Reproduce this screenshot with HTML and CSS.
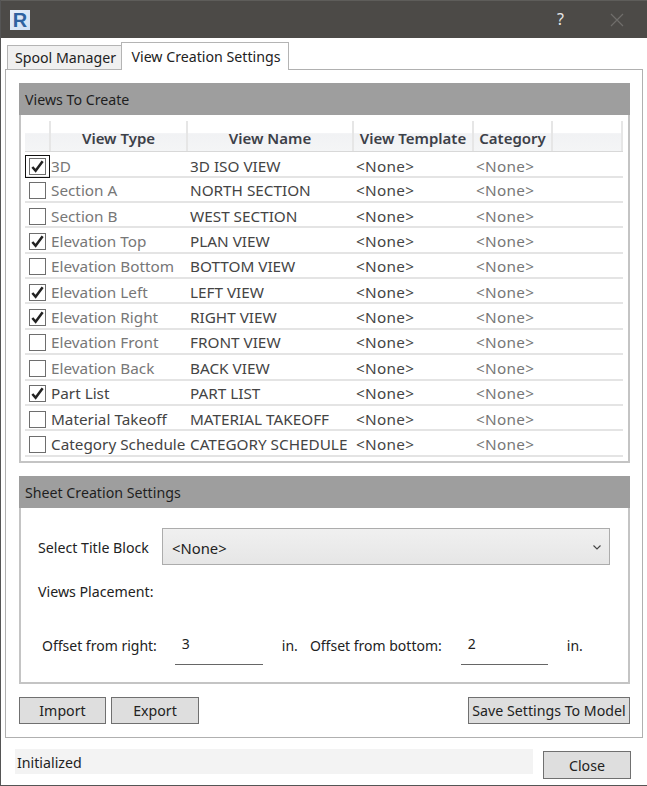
FILE: index.html
```html
<!DOCTYPE html>
<html lang="en">
<head>
<meta charset="utf-8">
<title>View Creation Settings</title>
<link rel="stylesheet" href="styles.css">
</head>
<body>
<div class="window">
  <header class="titlebar">
    <div class="logo"><span>R</span></div>
    <div class="help">?</div>
    <svg class="close-x" width="14" height="14" viewBox="0 0 14 14"><path d="M1 1L13 13M13 1L1 13" stroke="#6f6e6b" stroke-width="1.2" fill="none"/></svg>
  </header>
  <div class="tabs">
    <div class="tab">Spool Manager</div>
    <div class="tab active">View Creation Settings</div>
  </div>
  <main class="panel">
    <section class="group group-views">
      <h2 class="group-head">Views To Create</h2>
      <div class="group-body views-body">
        <div class="grid">
          <div class="row head">
            <div class="c c0"></div><div class="c c1">View Type</div><div class="c c2">View Name</div><div class="c c3">View Template</div><div class="c c4">Category</div><div class="c c5"></div>
          </div>
          <div class="row"><div class="c c0"><span class="focus"><span class="cb on"><svg viewBox="0 0 16 16"><path d="M2.5 8.5L6 12.5L13.5 2.5" /></svg></span></span></div><div class="c c1 dim">3D</div><div class="c c2">3D ISO VIEW</div><div class="c c3">&lt;None&gt;</div><div class="c c4">&lt;None&gt;</div></div>
          <div class="row"><div class="c c0"><span class="cb"></span></div><div class="c c1 dim">Section A</div><div class="c c2">NORTH SECTION</div><div class="c c3">&lt;None&gt;</div><div class="c c4">&lt;None&gt;</div></div>
          <div class="row"><div class="c c0"><span class="cb"></span></div><div class="c c1 dim">Section B</div><div class="c c2">WEST SECTION</div><div class="c c3">&lt;None&gt;</div><div class="c c4">&lt;None&gt;</div></div>
          <div class="row"><div class="c c0"><span class="cb on"><svg viewBox="0 0 16 16"><path d="M2.5 8.5L6 12.5L13.5 2.5" /></svg></span></div><div class="c c1 dim">Elevation Top</div><div class="c c2">PLAN VIEW</div><div class="c c3">&lt;None&gt;</div><div class="c c4">&lt;None&gt;</div></div>
          <div class="row"><div class="c c0"><span class="cb"></span></div><div class="c c1 dim">Elevation Bottom</div><div class="c c2">BOTTOM VIEW</div><div class="c c3">&lt;None&gt;</div><div class="c c4">&lt;None&gt;</div></div>
          <div class="row"><div class="c c0"><span class="cb on"><svg viewBox="0 0 16 16"><path d="M2.5 8.5L6 12.5L13.5 2.5" /></svg></span></div><div class="c c1 dim">Elevation Left</div><div class="c c2">LEFT VIEW</div><div class="c c3">&lt;None&gt;</div><div class="c c4">&lt;None&gt;</div></div>
          <div class="row"><div class="c c0"><span class="cb on"><svg viewBox="0 0 16 16"><path d="M2.5 8.5L6 12.5L13.5 2.5" /></svg></span></div><div class="c c1 dim">Elevation Right</div><div class="c c2">RIGHT VIEW</div><div class="c c3">&lt;None&gt;</div><div class="c c4">&lt;None&gt;</div></div>
          <div class="row"><div class="c c0"><span class="cb"></span></div><div class="c c1 dim">Elevation Front</div><div class="c c2">FRONT VIEW</div><div class="c c3">&lt;None&gt;</div><div class="c c4">&lt;None&gt;</div></div>
          <div class="row"><div class="c c0"><span class="cb"></span></div><div class="c c1 dim">Elevation Back</div><div class="c c2">BACK VIEW</div><div class="c c3">&lt;None&gt;</div><div class="c c4">&lt;None&gt;</div></div>
          <div class="row"><div class="c c0"><span class="cb on"><svg viewBox="0 0 16 16"><path d="M2.5 8.5L6 12.5L13.5 2.5" /></svg></span></div><div class="c c1">Part List</div><div class="c c2">PART LIST</div><div class="c c3">&lt;None&gt;</div><div class="c c4">&lt;None&gt;</div></div>
          <div class="row"><div class="c c0"><span class="cb"></span></div><div class="c c1">Material Takeoff</div><div class="c c2">MATERIAL TAKEOFF</div><div class="c c3">&lt;None&gt;</div><div class="c c4">&lt;None&gt;</div></div>
          <div class="row"><div class="c c0"><span class="cb"></span></div><div class="c c1">Category Schedule</div><div class="c c2">CATEGORY SCHEDULE</div><div class="c c3">&lt;None&gt;</div><div class="c c4">&lt;None&gt;</div></div>
        </div>
      </div>
    </section>
    <section class="group group-sheet">
      <h2 class="group-head">Sheet Creation Settings</h2>
      <div class="group-body sheet-body">
        <div class="title-row">
          <label class="title-label">Select Title Block</label>
          <div class="combo"><span>&lt;None&gt;</span><svg width="8" height="5" viewBox="0 0 8 5"><path d="M0.5 0.5L4 4L7.5 0.5" stroke="#444" stroke-width="1.1" fill="none"/></svg></div>
        </div>
        <div class="placement">Views Placement:</div>
        <div class="offset-row">
          <span class="off-label">Offset from right:</span>
          <span class="input input-right">3</span>
          <span class="unit unit-right">in.</span>
          <span class="off-label">Offset from bottom:</span>
          <span class="input input-bottom">2</span>
          <span class="unit unit-bottom">in.</span>
        </div>
      </div>
    </section>
    <div class="actions">
      <button class="btn btn-import">Import</button>
      <button class="btn btn-export">Export</button>
      <button class="btn btn-save">Save Settings To Model</button>
    </div>
  </main>
  <footer class="statusline">
    <div class="status">Initialized</div>
    <button class="btn btn-close">Close</button>
  </footer>
</div>
</body>
</html>
```
FILE: styles.css
```css
* { box-sizing: border-box; }
html, body { margin: 0; padding: 0; background: #fff; }
body { font-family: "Noto Sans", "Open Sans", sans-serif; font-size: 14.2px; color: #222; }
.window { width: 647px; height: 786px; border-left: 1px solid #555; border-bottom: 1px solid #555; display: flex; flex-direction: column; overflow: hidden; }
.titlebar { height: 38px; flex: none; background: #4c4a47; border-top: 1px solid #5e5d5a; display: flex; align-items: center; padding-left: 10px; margin-left: -1px; }
.logo { width: 20px; height: 20px; background: linear-gradient(135deg, #e6eef8, #cfe0f4); display: flex; align-items: center; justify-content: center; }
.logo span { font: bold 20px "Liberation Sans", sans-serif; color: #2e62a0; line-height: 20px; }
.help { margin-left: auto; color: #e8e8e8; font-size: 16px; line-height: 20px; margin-top: -2px; }
.close-x { margin-left: 46px; margin-right: 23px; }
.tabs { flex: none; height: 32px; padding: 4px 0 0 6px; display: flex; align-items: flex-end; position: relative; z-index: 1; margin-bottom: -1px; }
.tab { height: 25px; width: 114px; background: #f0f0f0; border: 1px solid #b4b4b4; border-right: 0; text-align: center; padding-left: 2px; line-height: 23px; color: #222; white-space: nowrap; }
.tab.active { height: 28px; width: 168px; background: #fff; border: 1px solid #b4b4b4; border-bottom: 0; line-height: 27px; }
.panel { flex: none; width: 638px; height: 669px; margin-left: 4px; border: 1px solid #b0b0b0; padding: 13px 12px 0 13px; display: flex; flex-direction: column; }
.group { display: flex; flex-direction: column; }
.group-views { height: 380px; }
.group-sheet { height: 208px; margin-top: 13px; }
.group-head { margin: 0; height: 32px; flex: none; background: #9e9e9e; font-size: 14.2px; font-weight: 400; line-height: 34px; padding-left: 6px; color: #1e1e1e; }
.group-body { flex: 1; border: 2px solid #c4c4c4; border-top: 0; }
.views-body { padding: 6px 5px 0 4px; }
.grid { display: flex; flex-direction: column; }
.row { display: grid; grid-template-columns: 26px 137px 166px 120px 79px 70px; height: 25.36px; border-bottom: 2px solid #e4e4e4; align-items: center; font-size: 15.3px; color: #444; }
.row.head { height: 31.3px; border-bottom: 1px solid #d8d8d8; background: linear-gradient(#fff 0, #fff 40%, #f1f2f4 42%, #f4f5f6 100%); font-weight: 600; font-size: 15px; color: #3c4048; }
.row.head .c { height: 100%; border-right: 2px solid #e6e6e6; display: flex; align-items: center; justify-content: center; white-space: nowrap; padding: 3px 0 0; color: #3c4048; letter-spacing: 0; }
.c { white-space: nowrap; padding: 2px 0 0 2px; }
.c0 { padding: 3px 0 0 4px; display: flex; align-items: center; }
.c1 { padding-left: 0; }
.dim { color: #777; }
.c4 { color: #777; }
.c3, .c4 { letter-spacing: .3px; }
.cb { display: block; width: 17px; height: 17px; border: 1px solid #6e6e6e; background: #fff; flex: none; }
.cb svg { display: block; width: 15px; height: 15px; }
.cb path { fill: none; stroke: #222; stroke-width: 2.7; }
.focus { display: block; margin-left: -4px; border: 1px solid #111; flex: none; width: 25px; height: 23px; padding: 2px 3px; }
.sheet-body { padding: 20px 18px 0 17px; }
.title-row { display: flex; align-items: center; height: 37px; }
.title-label { width: 124px; flex: none; color: #222; padding-top: 2px; }
.combo { flex: 1; height: 37px; background: linear-gradient(#f0f0f0, #e6e6e6); border: 1px solid #acacac; display: flex; align-items: center; justify-content: space-between; padding: 2px 8px 0 9px; font-size: 14.8px; }
.placement { margin-top: 16px; line-height: 22px; }
.offset-row { display: flex; align-items: flex-start; margin: 28px 0 0 4px; height: 38px; font-size: 14px; }
.off-label { line-height: 26px; margin-top: 2px; white-space: nowrap; }
.input { display: block; height: 35px; border-bottom: 1px solid #666; line-height: 28px; padding-left: 7px; flex: none; width: 88px; margin-top: -1px; }
.input-right { margin-left: 18px; }
.input-bottom { margin-left: 19px; width: 87px; }
.unit { line-height: 26px; margin-top: 2px; }
.unit-right { margin: 2px 12px 0 19px; }
.unit-bottom { margin-left: 19px; }
.actions { display: flex; margin-top: 13px; gap: 5px; }
.btn { font: inherit; color: #222; height: 27px; background: #dedede; border: 1px solid #707070; padding: 0; border-radius: 0; white-space: nowrap; }
.btn-import { width: 87px; }
.btn-export { width: 88px; }
.btn-save { width: 162px; margin-left: auto; }
.statusline { flex: none; display: flex; align-items: flex-start; padding: 11px 0 0 14px; }
.status { width: 518px; height: 25px; background: #f3f3f3; line-height: 27px; padding-left: 2px; color: #222; }
.btn-close { width: 88px; height: 28px; margin: 2px 0 0 10px; }
```
